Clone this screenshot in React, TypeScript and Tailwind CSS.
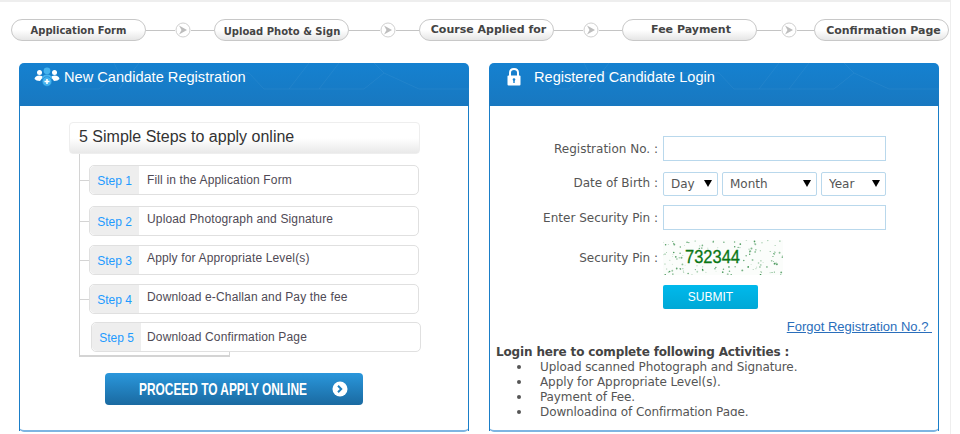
import React from "react";

const verdana = "font-['DejaVu_Sans',Verdana,sans-serif]";
const arial = "font-['Liberation_Sans',Arial,sans-serif]";

const tabs = [
  { label: "Application Form", text: "text-[10px]", line: "w-[29px]", rest: "w-[23px]" },
  { label: "Upload Photo & Sign", text: "text-[10px] pt-[2px] pl-[1px]", line: "w-[31px]", rest: "w-[23px]" },
  { label: "Course Applied for", text: "text-[11px] pt-[1px] pl-[4px]", line: "w-[29px]", rest: "w-[23px]" },
  { label: "Fee Payment", text: "text-[11px] pt-[1px] pl-[3px]", line: "w-[24px]", rest: "w-[17px]" },
  { label: "Confirmation Page", text: "text-[11px] pt-[2px] pl-[4px]" },
];

const steps = [
  { text: "Fill in the Application Form", row: "mt-[11px] ml-[10px]", copy: "pt-[5px]" },
  { text: "Upload Photograph and Signature", row: "mt-[11px] ml-[10px]", copy: "pt-[3px]" },
  { text: "Apply for Appropriate Level(s)", row: "mt-[9px] ml-[10px]", copy: "pt-[3px]" },
  { text: "Download e-Challan and Pay the fee", row: "mt-[9px] ml-[10px]", copy: "pt-[3px]" },
  { text: "Download Confirmation Page", row: "mt-[8px] ml-[12px]", copy: "pt-[5px] -ml-[2px]" },
];

const activities = [
  "Upload scanned Photograph and Signature.",
  "Apply for Appropriate Level(s).",
  "Payment of Fee.",
  "Downloading of Confirmation Page.",
];

// speckle for the captcha, same every render
const noise = (n: number) => {
  const v = Math.sin(n * 12.9898) * 43758.5453;
  return v - Math.floor(v);
};
const dots = Array.from({ length: 170 }, (_, i) => ({
  x: noise(i + 1) * 120,
  y: noise(i + 500) * 35,
  r: 0.35 + noise(i + 900) * 0.65,
  o: 0.35 + noise(i + 1300) * 0.6,
})).filter((d) => !(d.x > 20 && d.x < 80 && d.y > 9 && d.y < 25));

function Pattern() {
  return (
    <svg className="absolute inset-0 h-full w-full" viewBox="0 0 450 43" preserveAspectRatio="none" fill="none" stroke="#ffffff" strokeOpacity="0.05">
      <path d="M60 26 L80 26 L100 10 L95 0 M100 10 L230 10 M230 10 L245 26 L270 26 L290 0 M270 26 L300 26 L320 0 M120 0 L100 26 M300 26 L345 26 L365 10 L355 0 M365 10 L400 26 L450 26" />
    </svg>
  );
}

function PanelHeader({ icon, title, gap }: { icon: React.ReactNode; title: string; gap: string }) {
  return (
    <div className="relative h-[43px] rounded-t-[5px] bg-gradient-to-b from-[#1581d0] to-[#1878c0] overflow-hidden">
      <Pattern />
      <div className={`relative flex h-[28px] items-center ${gap} text-white text-[14.6px] ${arial}`}>
        {icon}
        <span className="pt-[1px]">{title}</span>
      </div>
    </div>
  );
}

function UsersIcon() {
  return (
    <svg width="26" height="20" viewBox="0 0 26 20" className="shrink-0">
      <circle cx="5.5" cy="5.5" r="2.5" fill="#fff" />
      <path d="M0.5 12 Q1 8.5 5.5 8.5 Q8 8.5 9 10 L6 14 Q2 14 0.5 12Z" fill="#fff" />
      <circle cx="20.5" cy="5.5" r="2.5" fill="#fff" />
      <path d="M25.5 12 Q25 8.5 20.5 8.5 Q18 8.5 17 10 L20 14 Q24 14 25.5 12Z" fill="#fff" />
      <circle cx="13" cy="3.8" r="3.4" fill="#45b3ee" />
      <path d="M8 12 Q8 7.5 13 7.5 Q18 7.5 18 12Z" fill="#45b3ee" />
      <circle cx="13" cy="14.5" r="4.8" fill="#45b3ee" stroke="#1581d0" strokeWidth="0.6" />
      <path d="M13 12 V17 M10.5 14.5 H15.5" stroke="#fff" strokeWidth="1.6" />
    </svg>
  );
}

function LockIcon() {
  return (
    <svg width="14" height="18" viewBox="0 0 14 18" className="shrink-0">
      <path d="M3 8 V4.8 Q3 1 7 1 Q11 1 11 4.8 V8" fill="none" stroke="#fff" strokeWidth="2" />
      <rect x="0.5" y="7.5" width="13" height="10" rx="1" fill="#fff" />
      <circle cx="7" cy="11.5" r="1.3" fill="#1581d0" />
      <rect x="6.3" y="12" width="1.4" height="3" fill="#1581d0" />
    </svg>
  );
}

function Captcha() {
  return (
    <svg width="120" height="35" viewBox="0 0 120 35" className="block bg-[#fbfdfb]">
      {dots.map((d, i) => (
        <circle key={i} cx={d.x} cy={d.y} r={d.r} fill="#2f8a44" opacity={d.o} />
      ))}
      <text x="22" y="23" fontFamily="'Liberation Sans', Arial, sans-serif" fontSize="18" fill="#0a7614" stroke="#0a7614" strokeWidth="0.3" textLength="55" lengthAdjust="spacingAndGlyphs">
        732344
      </text>
    </svg>
  );
}

function FormRow({ label, children, row }: { label: string; children: React.ReactNode; row: string }) {
  return (
    <div className={`flex items-center ${row}`}>
      <div className="w-[173px] pr-[5px] text-right text-[12px] text-[#555] whitespace-pre">{label} :</div>
      {children}
    </div>
  );
}

function Select({ label, width }: { label: string; width: string }) {
  return (
    <div className={`relative h-[24px] ${width}`}>
      <select className={`h-full w-full appearance-none rounded-[2px] border border-[#b9d8ec] bg-white pl-[7px] text-[12px] text-[#555] ${verdana}`}>
        <option>{label}</option>
      </select>
      <span className="absolute right-[6px] top-[9px] h-0 w-0 border-x-[4px] border-t-[7px] border-x-transparent border-t-black" />
    </div>
  );
}

export default function App() {
  return (
    <div className={`h-[434px] w-[960px] overflow-hidden bg-white ${verdana}`}>
      <div className="h-[434px] w-[951px] border-r border-t-2 border-[#eeeeee]">
        <div className="flex items-center pl-[11px] pt-[17px]">
          {tabs.map((t) => (
            <React.Fragment key={t.label}>
              <div className={`flex h-[22px] w-[135px] shrink-0 items-center justify-center rounded-full border border-[#c8c8c8] bg-gradient-to-b from-white from-50% to-[#e6e6e6] font-bold text-[#444] ${t.text}`}>
                {t.label}
              </div>
              {t.line && (
                <div className="flex items-center">
                  <div className={`h-px bg-[#c4c4c4] ${t.line}`} />
                  <svg width="16" height="16" viewBox="0 0 16 16">
                    <circle cx="8" cy="8" r="7" fill="#fff" stroke="#d0d0d0" />
                    <path d="M4 3.5 L12 8 L4 12.5 L6.5 8Z" fill="#bdbdbd" />
                  </svg>
                  <div className={`h-px bg-[#c4c4c4] ${t.rest}`} />
                </div>
              )}
            </React.Fragment>
          ))}
        </div>

        <div className="flex gap-[20px] pl-[19px] pt-[22px]">
          <section className="h-[369px] w-[450px] rounded-[5px] border-b-2 border-[#7db5e2] bg-white">
            <PanelHeader icon={<UsersIcon />} title="New Candidate Registration" gap="gap-[4px] pl-[15px]" />
            <div className="h-[325px] border-x border-[#1a7ec8] pl-[49px] pt-[16px]">
              <div className={`flex h-[32px] w-[351px] items-center rounded-[4px] border border-[#eeeeee] bg-gradient-to-b from-white from-50% to-[#e9e9e9] pb-[2px] pl-[9px] text-[16px] text-[#333] ${arial}`}>
                5 Simple Steps to apply online
              </div>
              <div className="relative ml-[10px] flex w-[152px] flex-col">
                <div className="absolute left-0 top-0 h-[203px] w-[151px] border-b-2 border-l border-[#d4d4d4]" />
                <span className="absolute left-[150px] top-[197px] h-[6px] w-px bg-[#d4d4d4]" />
                {steps.map((s, i) => (
                  <div key={s.text} className={`relative flex h-[30px] w-[330px] ${s.row} rounded-[5px] border border-[#e0e0e0] bg-white`}>
                    {i < 4 && <span className="absolute -left-[11px] top-[14px] h-px w-[10px] bg-[#d4d4d4]" />}
                    <div className={`flex w-[49px] items-center justify-center rounded-l-[5px] bg-[#eeeeee] pt-[1px] text-[12px] text-[#1e9bff] ${arial}`}>
                      Step {i + 1}
                    </div>
                    <div className={`pl-[8px] text-[12px] text-[#4f4a55] ${arial} tracking-[0.15px] ${s.copy}`}>
                      {s.text}
                    </div>
                  </div>
                ))}
              </div>
              <div className="mt-[21px] ml-[36px] flex h-[32px] w-[258px] items-center rounded-[4px] bg-gradient-to-b from-[#2a97dc] to-[#1a6aa1] pl-[34px]">
                <span className={`w-[168px] origin-left scale-x-[0.7] whitespace-nowrap pt-[2px] text-[17px] font-bold text-white ${arial}`}>PROCEED TO APPLY ONLINE</span>
                <svg width="16" height="16" viewBox="0 0 16 16" className="ml-[25px] shrink-0">
                  <circle cx="8" cy="8" r="7.5" fill="#fff" />
                  <path d="M6 4.8 L9.2 8 L6 11.2" fill="none" stroke="#1f7fbe" strokeWidth="2" />
                </svg>
              </div>
            </div>
          </section>

          <section className="h-[369px] w-[450px] rounded-[5px] border-b-2 border-[#7db5e2] bg-white">
            <PanelHeader icon={<LockIcon />} title="Registered Candidate Login" gap="gap-[13px] pl-[18px]" />
            <div className="h-[325px] border-x border-[#1a7ec8] pt-[30px]">
              <FormRow label="Registration No." row="">
                <input className="h-[25px] w-[223px] border border-[#b9d8ec] bg-white" />
              </FormRow>
              <FormRow label="Date of Birth" row="mt-[10px]">
                <div className="flex gap-[4px]">
                  <Select label="Day" width="w-[55px]" />
                  <Select label="Month" width="w-[95px]" />
                  <Select label="Year" width="w-[65px]" />
                </div>
              </FormRow>
              <FormRow label="Enter Security Pin" row="mt-[10px]">
                <input className="h-[25px] w-[223px] border border-[#b9d8ec] bg-white" />
              </FormRow>
              <FormRow label="Security Pin" row="mt-[10px]">
                <Captcha />
              </FormRow>
              <button className={`ml-[173px] mt-[10px] block h-[24px] w-[95px] rounded-[2px] bg-gradient-to-b from-[#00b9ec] to-[#00a8d6] text-[12px] text-white ${arial}`}>
                SUBMIT
              </button>
              <div className="mt-[8px] flex justify-end pr-[6px]">
                <a className={`whitespace-pre text-[13px] text-[#2a6ebb] underline ${arial}`}>{"Forgot Registration No.? "}</a>
              </div>
              <div className="mt-[8px] h-[71px] overflow-hidden pl-[6px] text-[12px] leading-[15px] text-[#555] tracking-[-0.1px]">
                <div className="font-bold tracking-[-0.15px] text-[#444]">Login here to complete following Activities :</div>
                <ul className="pl-[21px]">
                  {activities.map((a) => (
                    <li key={a} className="flex items-center gap-[19px]">
                      <span className="size-[4px] rounded-full bg-[#555]" />
                      {a}
                    </li>
                  ))}
                </ul>
              </div>
            </div>
          </section>
        </div>
      </div>
    </div>
  );
}
